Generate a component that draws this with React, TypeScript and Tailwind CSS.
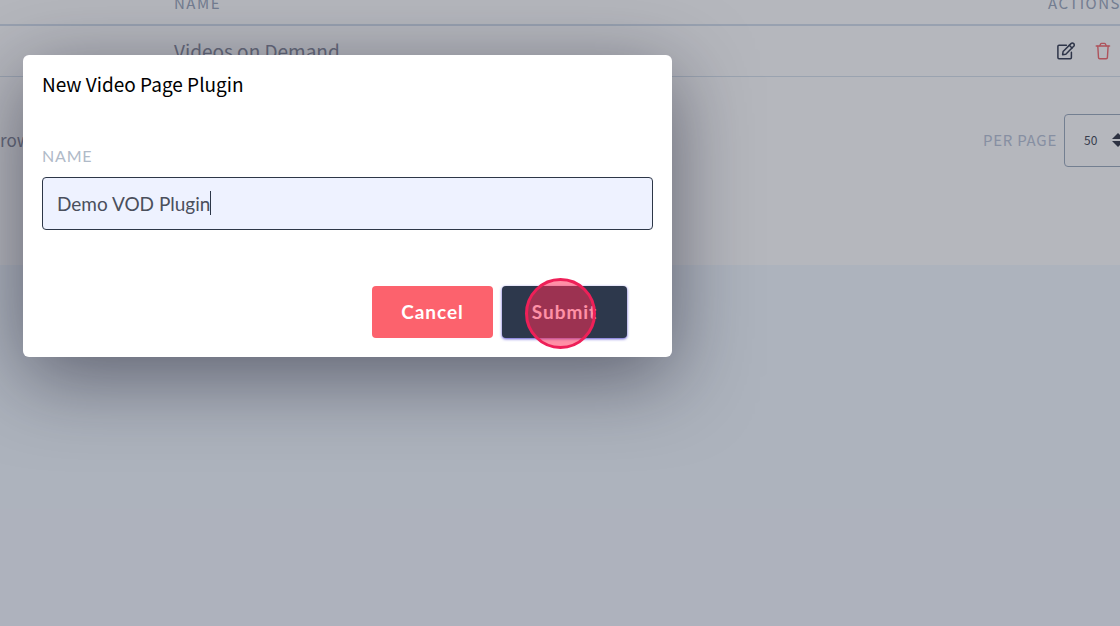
import { useState } from "react"

interface Plugin {
  id: number
  name: string
}

const plugins: Plugin[] = [{ id: 1, name: "Videos on Demand" }]

function EditIcon() {
  return (
    <svg viewBox="0 0 18 18" className="size-[18px]" fill="none" stroke="currentColor" strokeWidth="1.5" strokeLinecap="round" strokeLinejoin="round">
      <path d="M9.4 3.2H2a1.1 1.1 0 0 0-1.1 1.1v11.300a1.100 1.100 0 0 0 1.100 1.100h11.300a1.100 1.100 0 0 0 1.100-1.100V10.200" />
      <path d="M6.100 9.500l7.900-7.900a1.850 1.850 0 0 1 2.700 2.700l-7.900 7.900-3.200.5z" />
      <path d="M12.300 3.300l2.700 2.700" />
    </svg>
  )
}

function TrashIcon() {
  return (
    <svg viewBox="0 0 16 18" className="h-[18px] w-4" fill="none" stroke="currentColor" strokeWidth="1.4" strokeLinecap="round" strokeLinejoin="round">
      <path d="M1.200 4h13.400" />
      <path d="M4.800 3.800l.8-1.800a1 1 0 0 1 .9-.6h3a1 1 0 0 1 .9.600l.8 1.800" />
      <path d="M2.800 4.200l.7 11.400a1.200 1.200 0 0 0 1.200 1.100h6.500a1.200 1.200 0 0 0 1.200-1.100l.7-11.400" />
    </svg>
  )
}

function SortArrows() {
  return (
    <svg viewBox="0 0 12 14" className="pointer-events-none absolute right-5 top-[19px] h-[14px] w-3" fill="#3a3f4e">
      <path d="M6 0l6 6H0z" />
      <path d="M6 14L0 8h12z" />
    </svg>
  )
}

function PluginList() {
  const [perPage, setPerPage] = useState("50")

  return (
    <main className="-mt-[18px] -mr-6 bg-white pb-[98px] text-[#8d90a0]">
      <table className="w-full text-left">
        <thead>
          <tr className="h-[43px] border-b-2 border-[#d5e0ec] text-[15px] tracking-widest text-[#a0abc0]">
            <th className="w-[174px]" aria-label="Select" />
            <th className="font-normal">NAME</th>
            <th className="w-24 font-normal">ACTIONS</th>
          </tr>
        </thead>
        <tbody>
          {plugins.map((plugin) => (
            <tr key={plugin.id} className="h-[51px] border-b border-[#d8e2ed]">
              <td />
              <td className="text-[19px] leading-7">{plugin.name}</td>
              <td className="pl-[9px]">
                <div className="flex items-center gap-5">
                  <button aria-label="Edit" className="text-[#3c4357]">
                    <EditIcon />
                  </button>
                  <button aria-label="Delete" className="text-[#f56e72]">
                    <TrashIcon />
                  </button>
                </div>
              </td>
            </tr>
          ))}
        </tbody>
      </table>

      <div className="mt-[37px] flex items-center justify-between">
        <p className="text-[17px]">rows</p>
        <div className="flex items-center gap-[7px]">
          <label htmlFor="per-page" className="text-[15px] tracking-wider text-[#bcc6d8]">
            PER PAGE
          </label>
          <div className="relative">
            <select
              id="per-page"
              value={perPage}
              onChange={(e) => setPerPage(e.target.value)}
              className="h-[53px] w-20 appearance-none rounded border border-[#a0aec0] bg-transparent pl-[19px] text-[12px] text-[#4a4f5c]"
            >
              <option>10</option>
              <option>50</option>
              <option>100</option>
            </select>
            <SortArrows />
          </div>
        </div>
      </div>
    </main>
  )
}

function NewPluginModal() {
  const [name, setName] = useState("Demo VOD Plugin")

  return (
    <div className="absolute inset-0 bg-[#11152a]/31 pl-[23px] pt-[55px]">
      <form
        role="dialog"
        aria-labelledby="modal-title"
        onSubmit={(e) => e.preventDefault()}
        className="w-full max-w-[649px] rounded-md bg-white px-[19px] pb-[19px] pt-[14px] shadow-[0_20px_80px_rgba(15,15,35,0.5)]"
      >
        <h2 id="modal-title" className="text-[19px] leading-[30px] text-black">
          New Video Page Plugin
        </h2>

        <div className="mt-[45px] font-['Lato','Open_Sans',sans-serif]">
          <label htmlFor="plugin-name" className="block text-base leading-6 tracking-wider text-[#b0bac8]">
            NAME
          </label>
          <div className="relative mt-[9px]">
            <input
              id="plugin-name"
              type="text"
              value={name}
              onChange={(e) => setName(e.target.value)}
              className="h-[53px] w-full rounded border border-[#2d3748] bg-[#eef2ff] px-[14px] text-[19px] text-[#4a4f5c] outline-none"
            />
            <span className="absolute left-[168px] top-[14px] h-6 w-px bg-[#2d3748]" />
          </div>
        </div>

        <div className="mt-14 flex justify-end gap-[9px] pr-[26px] font-['Lato','Open_Sans',sans-serif] text-[19px] font-bold tracking-wider text-white">
          <button type="button" className="h-[52px] w-[121px] rounded bg-[#fc626d]">
            Cancel
          </button>
          <button type="submit" className="relative h-[52px] w-[125px] rounded bg-[#2d384c] shadow-[0_1px_3px_#5a50d0]">
            Submit
            <span className="pointer-events-none absolute -top-2 left-[23px] size-[71px] rounded-full border-3 border-[#ee2058] bg-[#ff2d57]/53" />
          </button>
        </div>
      </form>
    </div>
  )
}

export default function App() {
  return (
    <div className="relative flow-root min-h-screen overflow-hidden bg-[#f4f9ff] font-['Noto_Sans_CJK_SC','Noto_Sans',sans-serif]">
      <PluginList />
      <NewPluginModal />
    </div>
  )
}
